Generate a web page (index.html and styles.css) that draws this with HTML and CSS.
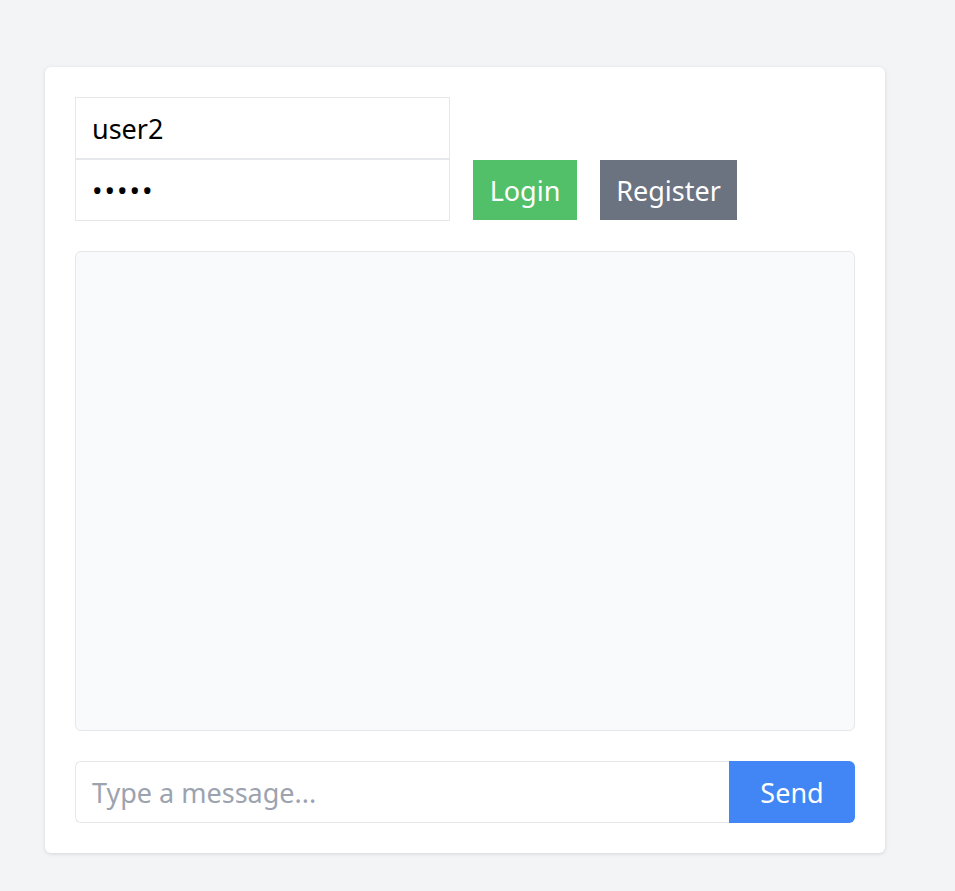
FILE: index.html
```html
<!DOCTYPE html>
<html>
<head>
<meta charset="utf-8">
<link rel="stylesheet" href="styles.css">
</head>
<body>
<div class="card">
  <div class="auth">
    <div class="fields">
      <input class="field" type="text" value="user2">
      <input class="field field-pass" type="password" value="12345">
    </div>
    <button class="btn btn-login">Login</button>
    <button class="btn btn-register">Register</button>
  </div>
  <div class="messages"></div>
  <div class="composer">
    <input class="msg-input" type="text" placeholder="Type a message...">
    <button class="btn-send">Send</button>
  </div>
</div>
</body>
</html>
```

FILE: styles.css
```css
* { box-sizing: border-box; }
html, body { margin: 0; }
body {
  background: #f3f4f6;
  font-family: "Noto Sans", "Open Sans", sans-serif;
  padding: 67px 0 0 45px;
  height: 891px;
}
.card {
  width: 840px;
  height: 786px;
  background: #fff;
  border-radius: 6px;
  box-shadow: 0 1px 4px rgba(0,0,0,0.12);
  padding: 30px;
  display: flex;
  flex-direction: column;
}
.auth {
  display: flex;
  align-items: flex-end;
}
.fields {
  display: flex;
  flex-direction: column;
  width: 375px;
}
.field {
  width: 375px;
  height: 62px;
  border: 1px solid #e5e7eb;
  padding: 0 16px;
  font-family: inherit;
  font-size: 27px;
  color: #000;
  outline: none;
  border-radius: 0;
  margin: 0;
}
.field-pass {
  letter-spacing: 2px;
  font-size: 28px;
}
.btn {
  height: 60px;
  border: none;
  color: #fff;
  font-family: inherit;
  font-size: 27px;
  padding: 0;
  margin: 0 0 1px 23px;
  border-radius: 0;
}
.btn-login { background: #52bf69; width: 104px; }
.btn-register { background: #6b7280; width: 137px; }
.messages {
  margin-top: 30px;
  height: 480px;
  background: #f9fafb;
  border: 1px solid #e5e7eb;
  border-radius: 6px;
}
.composer {
  margin-top: 30px;
  display: flex;
  height: 62px;
}
.msg-input {
  flex: 1;
  height: 62px;
  border: 1px solid #e5e7eb;
  border-right: none;
  border-radius: 6px 0 0 6px;
  padding: 0 16px;
  font-family: inherit;
  font-size: 27px;
  outline: none;
}
.msg-input::placeholder { color: #9ca3af; }
.btn-send {
  width: 126px;
  height: 62px;
  border: none;
  background: #4285f4;
  color: #fff;
  font-family: inherit;
  font-size: 27px;
  border-radius: 0 6px 6px 0;
}
```
